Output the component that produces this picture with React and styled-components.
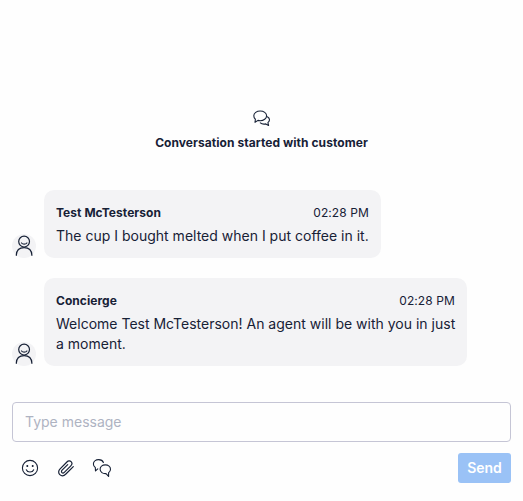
import React from "react";
import styled, { createGlobalStyle } from "styled-components";

const GlobalStyle = createGlobalStyle`
  *, *::before, *::after { box-sizing: border-box; }
  body {
    margin: 0;
    background: #fefefe;
    color: #172136;
    font-family: Inter, "Liberation Sans", sans-serif;
  }
`;

const Chat = styled.main`
  display: flex;
  flex-direction: column;
  height: 501px;
  padding: 109px 12px 0;
`;

const Notice = styled.div`
  display: flex;
  flex: none;
  flex-direction: column;
  align-items: center;
  height: 81px;
  font-size: 12px;
  font-weight: 700;
  line-height: 16px;
  letter-spacing: 0.06px;
`;

const NoticeText = styled.p`
  margin: 8px 0 0;
`;

const Row = styled.article`
  display: flex;
  align-items: flex-end;
  gap: 8px;
  margin-bottom: 20px;
`;

const Avatar = styled.div`
  display: flex;
  flex: none;
  width: 24px;
  height: 24px;
  border-radius: 50%;
  background: #f3f3f5;
`;

const Bubble = styled.div`
  width: ${(p) => p.$width}px;
  padding: 15px 12px 12px;
  border-radius: 10px;
  background: #f3f3f5;
`;

const Meta = styled.header`
  display: flex;
  justify-content: space-between;
  font-size: 12px;
  line-height: 16px;
`;

const Author = styled.strong`
  font-weight: 700;
  letter-spacing: 0.04px;
`;

const Time = styled.time`
  letter-spacing: 0.1px;
`;

const Body = styled.p`
  margin: 5px -4px 0 0;
  font-size: 14px;
  line-height: 20px;
  letter-spacing: 0.005px;
`;

const Composer = styled.form`
  display: flex;
  flex-direction: column;
  gap: 11px;
  margin-top: 16px;
`;

const Field = styled.input`
  width: 100%;
  height: 40px;
  padding: 0 12px 2px;
  border: 1px solid #c5c5d5;
  border-radius: 4px;
  background: #fefefe;
  color: inherit;
  font: inherit;
  font-size: 14px;
  outline: none;
  &::placeholder { color: #aeb3c2; opacity: 1; }
`;

const Toolbar = styled.div`
  display: flex;
  align-items: center;
  justify-content: space-between;
`;

const Tools = styled.div`
  display: flex;
  gap: 12px;
  padding-left: 6px;
`;

const Tool = styled.button`
  display: flex;
  width: 24px;
  height: 24px;
  padding: 0;
  border: 0;
  background: none;
  color: inherit;
`;

const Send = styled.button`
  width: 53px;
  height: 30px;
  padding: 0 0 2px;
  border: 0;
  border-radius: 3px;
  background: #9ac2f6;
  color: #fff;
  font: inherit;
  font-size: 14px;
  font-weight: 600;
`;

const Svg = styled.svg.attrs({ fill: "none", stroke: "currentColor", strokeLinecap: "round", strokeLinejoin: "round" })`
  display: block;
  flex: none;
  stroke-width: ${(p) => p.$weight || 1.1};
`;

const ConversationIcon = () => (
  <Svg width="18" height="18" viewBox="0 0 18 18">
    <path d="M2.4 10.3C1.3 9.4.8 8.2.8 6.8.8 4 3.7 2 7.2 2s6.4 2 6.4 4.8-2.9 4.9-6.4 4.9c-.8 0-1.5-.1-2.2-.3L2 13.3z" />
    <path d="M14.4 7.8c1.4.8 2.1 1.9 2.1 3 0 1.2-.6 2.1-1.6 2.8l.7 2.9-2.8-1.6c-2 .4-4.2.1-5.5-1" />
  </Svg>
);

const PersonIcon = () => (
  <Svg width="24" height="24" viewBox="0 0 24 24" $weight={1.2}>
    <circle cx="12.1" cy="7.6" r="5.4" />
    <path d="M9.5 9c1.2 1.5 4.2 1.5 5.4 0M4.3 21.3c.2-5 3.4-7.6 7.8-7.6s7.6 2.6 7.8 7.6" />
  </Svg>
);

const SmileIcon = () => (
  <Svg width="24" height="24" viewBox="0 0 24 24">
    <circle cx="12" cy="12" r="7.6" />
    <path d="M8.3 13.8c1.2 3 6.2 3 7.4 0" />
    <circle cx="9.3" cy="10" r=".45" fill="currentColor" />
    <circle cx="14.7" cy="10" r=".45" fill="currentColor" />
  </Svg>
);

const ClipIcon = () => (
  <Svg width="24" height="24" viewBox="0 0 24 24" $weight={1.2}>
    <path d="m19.3 10.6-7.4 7.4c-1.9 1.9-4.5 2.1-6.1.6s-1.5-4 .3-5.8l6.8-6.8c1.3-1.3 3.1-1.4 4.2-.3s1 2.9-.3 4.2l-6.5 6.5c-.8.8-1.8.8-2.4.2s-.6-1.6.2-2.4l5.6-5.6" />
  </Svg>
);

const RepliesIcon = () => (
  <Svg width="24" height="24" viewBox="0 0 24 24">
    <path d="M13.4 6.5C12.8 4.8 11 3.6 8.7 3.6c-3 0-5.3 1.9-5.3 4.4 0 1.5.7 2.7 1.9 3.5l.2 3.4 2.3-2.1" />
    <path d="M15.3 8.9c3 0 5.2 1.9 5.2 4.4 0 1.5-.8 2.7-1.9 3.4v3.7l-2.6-2.8c-3.2.3-5.9-1.6-5.9-4.3 0-2.5 2.2-4.4 5.2-4.4z" />
  </Svg>
);

const messages = [
  { author: "Test McTesterson", text: "The cup I bought melted when I put coffee in it.", width: 337 },
  { author: "Concierge", text: "Welcome Test McTesterson! An agent will be with you in just a moment.", width: 423 },
];

export default function App() {
  return (
    <>
      <GlobalStyle />
      <Chat>
        <Notice>
          <ConversationIcon />
          <NoticeText>Conversation started with customer</NoticeText>
        </Notice>
        {messages.map((m) => (
          <Row key={m.author}>
            <Avatar><PersonIcon /></Avatar>
            <Bubble $width={m.width}>
              <Meta>
                <Author>{m.author}</Author>
                <Time>02:28 PM</Time>
              </Meta>
              <Body>{m.text}</Body>
            </Bubble>
          </Row>
        ))}
        <Composer>
          <Field placeholder="Type message" aria-label="Message" />
          <Toolbar>
            <Tools>
              <Tool type="button" aria-label="Emoji"><SmileIcon /></Tool>
              <Tool type="button" aria-label="Attach"><ClipIcon /></Tool>
              <Tool type="button" aria-label="Replies"><RepliesIcon /></Tool>
            </Tools>
            <Send type="button">Send</Send>
          </Toolbar>
        </Composer>
      </Chat>
    </>
  );
}
